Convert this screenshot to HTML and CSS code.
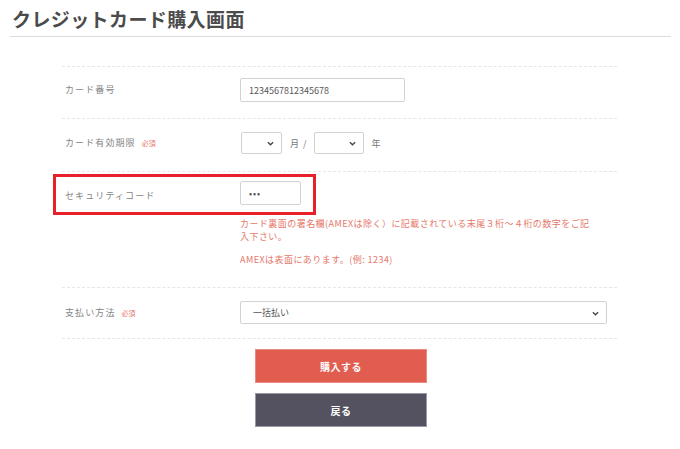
FILE: index.html
```html
<!DOCTYPE html>
<html lang="ja">
<head>
<meta charset="utf-8">
<link rel="stylesheet" href="styles.css">
</head>
<body>
<h1 class="title">クレジットカード購入画面</h1>
<form class="form">
  <div class="row r1">
    <div class="label">カード番号</div>
    <div class="field"><input class="text card" type="text" value="1234567812345678"></div>
  </div>
  <div class="row r2">
    <div class="label">カード有効期限<span class="req">必須</span></div>
    <div class="field inline">
      <span class="selwrap month"><select class="sel"><option></option></select><svg class="chev" viewBox="0 0 8 5" width="7" height="5"><path d="M1 1l3 3 3-3" fill="none" stroke="#444" stroke-width="1.5"/></svg></span>
      <span class="unit">月 /</span>
      <span class="selwrap year"><select class="sel"><option></option></select><svg class="chev" viewBox="0 0 8 5" width="7" height="5"><path d="M1 1l3 3 3-3" fill="none" stroke="#444" stroke-width="1.5"/></svg></span>
      <span class="unit">年</span>
    </div>
  </div>
  <div class="row sec">
    <div class="label">セキュリティコード</div>
    <div class="field">
      <input class="text code" type="password" value="123">
      <p class="help">カード裏面の署名欄(AMEXは除く）に記載されている末尾３桁～４桁の数字をご記入下さい。</p>
      <p class="help">AMEXは表面にあります。(例: 1234)</p>
    </div>
    <div class="highlight"></div>
  </div>
  <div class="row r4">
    <div class="label">支払い方法<span class="req">必須</span></div>
    <div class="field"><span class="selwrap pay"><select class="sel"><option>一括払い</option></select><svg class="chev" viewBox="0 0 8 5" width="7" height="5"><path d="M1 1l3 3 3-3" fill="none" stroke="#444" stroke-width="1.5"/></svg></span></div>
  </div>
  <div class="buttons">
    <button type="button" class="btn buy">購入する</button>
    <button type="button" class="btn back">戻る</button>
  </div>
</form>
</body>
</html>
```
FILE: styles.css
```css
* { box-sizing: border-box; }
body {
  margin: 0;
  background: #fff;
  font-family: "Noto Sans CJK JP", "Noto Sans", sans-serif;
  color: #555;
}
.title {
  margin: 0 9px 0 10px;
  padding: 5px 0 4px 2px;
  font-size: 19px;
  line-height: 27px;
  font-weight: 700;
  letter-spacing: 0.4px;
  color: #4b4b4b;
  border-bottom: 1px solid #dcdcdc;
}
.form {
  margin: 29px 0 0 62px;
  width: 555px;
}
.row {
  position: relative;
  display: flex;
  border-top: 1px dashed #e6e6e6;
}
.r4 { border-bottom: 1px dashed #e6e6e6; }
.label {
  width: 178px;
  padding-left: 3px;
  font-size: 9px;
  letter-spacing: 1.1px;
  color: #858585;
}
.req {
  margin-left: 6px;
  font-size: 7px;
  color: #e8776b;
  letter-spacing: 0;
}
.field { flex: 1; }
.inline { display: flex; align-items: center; height: 22px; }
.text {
  height: 24px;
  border: 1px solid #d2d2d2;
  border-radius: 2px;
  padding: 0 8px;
  font-family: inherit;
  font-size: 9px;
  color: #555;
  outline: none;
  display: block;
}
.r1 { padding: 11px 0 16px; }
.r1 .label { line-height: 24px; }
.card { width: 165px; }
.code { width: 61px; letter-spacing: 1px; }
.selwrap { position: relative; display: block; }
.sel {
  appearance: none;
  -webkit-appearance: none;
  display: block;
  width: 100%;
  height: 22px;
  margin: 0;
  border: 1px solid #d2d2d2;
  border-radius: 2px;
  background: #fff;
  font-family: inherit;
  font-size: 9px;
  line-height: 20px;
  color: #555;
  padding: 0 20px 0 12px;
  outline: none;
}
.chev {
  position: absolute;
  right: 8px;
  top: 9px;
}
.r2 { padding: 13px 0 17px; }
.r2 .label { line-height: 22px; }
.month { width: 41px; margin-left: 1px; }
.year { width: 50px; }
.unit {
  font-size: 9px;
  color: #777;
  margin: 0 6px 0 8px;
  letter-spacing: 1px;
}
.sec { padding: 9px 0 21px; }
.sec .label { line-height: 30px; }
.code { height: 24px; }
.help {
  margin: 12px 0 0;
  width: 354px;
  font-size: 9px;
  line-height: 13px;
  letter-spacing: 0.45px;
  color: #e6776a;
}
.help + .help { margin-top: 10px; }
.highlight {
  position: absolute;
  left: -9px;
  top: 2px;
  width: 263px;
  height: 41px;
  border: 3px solid #e8202a;
  pointer-events: none;
}
.r4 { padding: 13px 0 13px; }
.r4 .label { line-height: 23px; }
.pay { width: 367px; }
.pay .sel { height: 23px; line-height: 21px; }
.pay .chev { top: 10px; }
.buttons {
  display: flex;
  flex-direction: column;
  align-items: center;
  gap: 10px;
  padding-top: 10px;
  padding-left: 3px;
}
.btn {
  width: 172px;
  height: 34px;
  border: 1px solid transparent;
  font-family: inherit;
  font-size: 10px;
  font-weight: 700;
  color: #fff;
  letter-spacing: 0.5px;
}
.buy { background: #e05d50; border-color: #ea8a80; }
.back { background: #545261; border-color: #9a98a6; }
```
